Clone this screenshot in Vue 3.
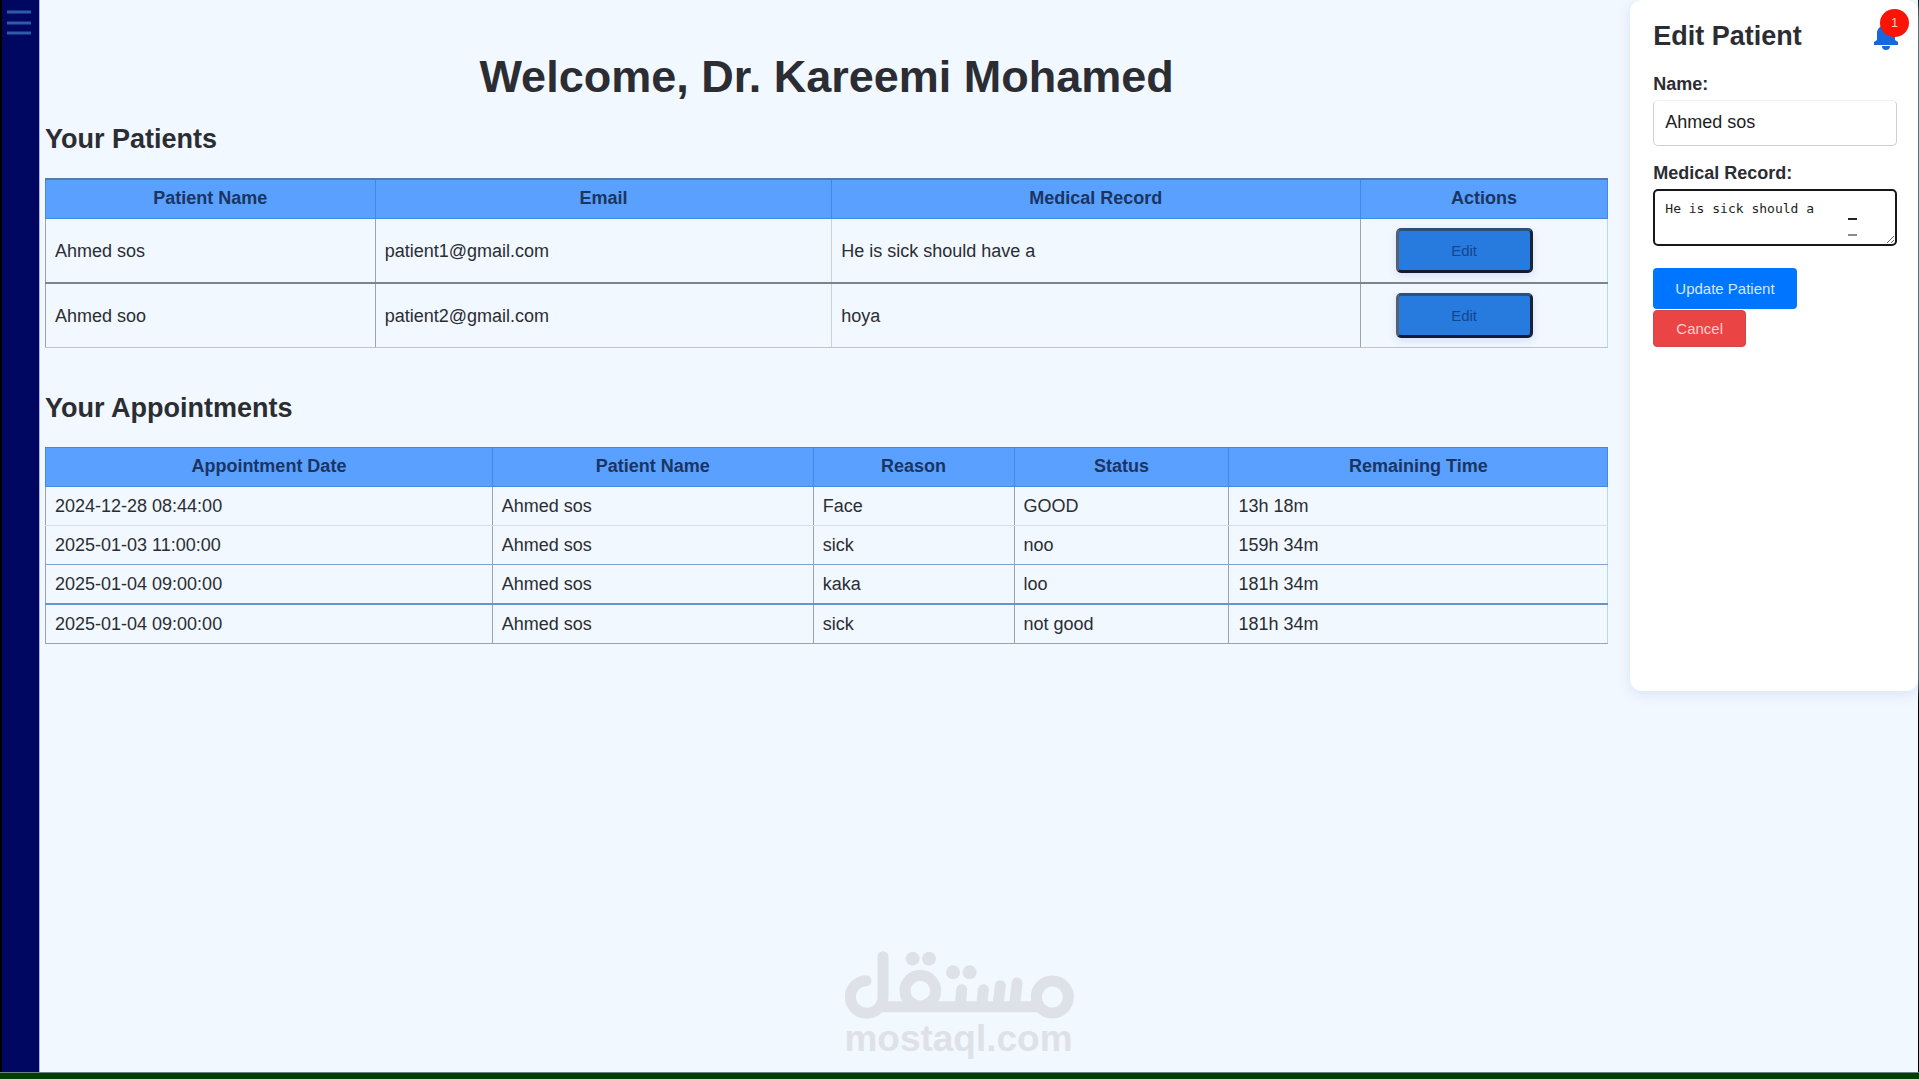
<script setup>
import { ref } from 'vue'

const patientColumns = [
  { label: 'Patient Name', weight: 330 },
  { label: 'Email', weight: 457 },
  { label: 'Medical Record', weight: 529 },
  { label: 'Actions', weight: 248 },
]
const patients = [
  { name: 'Ahmed sos', email: 'patient1@gmail.com', record: 'He is sick should have a' },
  { name: 'Ahmed soo', email: 'patient2@gmail.com', record: 'hoya' },
]

const appointmentColumns = [
  { label: 'Appointment Date', weight: 447 },
  { label: 'Patient Name', weight: 321 },
  { label: 'Reason', weight: 201 },
  { label: 'Status', weight: 215 },
  { label: 'Remaining Time', weight: 379 },
]
const appointments = [
  ['2024-12-28 08:44:00', 'Ahmed sos', 'Face', 'GOOD', '13h 18m'],
  ['2025-01-03 11:00:00', 'Ahmed sos', 'sick', 'noo', '159h 34m'],
  ['2025-01-04 09:00:00', 'Ahmed sos', 'kaka', 'loo', '181h 34m'],
  ['2025-01-04 09:00:00', 'Ahmed sos', 'sick', 'not good', '181h 34m'],
]

const share = (columns, column) =>
  (column.weight / columns.reduce((sum, c) => sum + c.weight, 0)) * 100 + '%'

const name = ref('Ahmed sos')
const record = ref('He is sick should a')
</script>

<template>
  <div class="page">
    <div class="layout">
      <nav class="sidebar">
        <button class="menu" type="button" aria-label="Menu">
          <svg width="24" height="25" viewBox="0 0 24 25" stroke="#2c5ba8" stroke-width="3">
            <path d="M0 2H24M0 13H24M0 23H24" />
          </svg>
        </button>
      </nav>

      <main class="content">
        <h1>Welcome, Dr. Kareemi Mohamed</h1>

        <section>
          <h2>Your Patients</h2>
          <table class="patients">
            <colgroup>
              <col v-for="c in patientColumns" :key="c.label" :style="{ width: share(patientColumns, c) }" />
            </colgroup>
            <thead>
              <tr>
                <th v-for="c in patientColumns" :key="c.label" scope="col">{{ c.label }}</th>
              </tr>
            </thead>
            <tbody>
              <tr v-for="p in patients" :key="p.email">
                <td>{{ p.name }}</td>
                <td>{{ p.email }}</td>
                <td>{{ p.record }}</td>
                <td><button class="edit" type="button">Edit</button></td>
              </tr>
            </tbody>
          </table>
        </section>

        <section>
          <h2>Your Appointments</h2>
          <table class="appointments">
            <colgroup>
              <col v-for="c in appointmentColumns" :key="c.label" :style="{ width: share(appointmentColumns, c) }" />
            </colgroup>
            <thead>
              <tr>
                <th v-for="c in appointmentColumns" :key="c.label" scope="col">{{ c.label }}</th>
              </tr>
            </thead>
            <tbody>
              <tr v-for="(row, i) in appointments" :key="i">
                <td v-for="(cell, j) in row" :key="j">{{ cell }}</td>
              </tr>
            </tbody>
          </table>
        </section>
      </main>

      <aside class="panel">
        <h2>Edit Patient</h2>
        <button class="bell" type="button" aria-label="Notifications">
          <svg width="24" height="28" viewBox="0 0 24 28" fill="#1668dc">
            <path d="M12 0a2 2 0 0 1 2 2v1c4 1 7 4 7 8v7l3 2v3H0v-3l3-2v-7c0-4 3-7 7-8V2a2 2 0 0 1 2-2zM8 24h8a4 4 0 0 1-8 0z" />
          </svg>
          <span class="badge">1</span>
        </button>
        <form @submit.prevent>
          <label for="name">Name:</label>
          <input id="name" v-model="name" type="text" />
          <label for="record">Medical Record:</label>
          <div class="record">
            <textarea id="record" v-model="record"></textarea>
            <svg class="beam" width="9" height="18" viewBox="0 0 9 18" stroke-width="2">
              <path d="M0 1H9" stroke="#26262a" />
              <path d="M0 17H9" stroke="#8b8b8f" />
            </svg>
          </div>
          <div class="actions">
            <button class="update" type="submit">Update Patient</button>
            <button class="cancel" type="button">Cancel</button>
          </div>
        </form>
      </aside>
    </div>

    <footer class="strip"></footer>

    <div class="watermark">
      <svg width="230" height="68" viewBox="72 62 690 204" fill="none" stroke="#dee2e8" stroke-width="33" stroke-linecap="round" role="img" aria-label="مستقل">
        <circle cx="697" cy="200" r="48" />
        <path d="M175 229H655" stroke-linecap="butt" />
        <path d="M138 151A49 49 0 1 0 189 200V79" />
        <circle cx="301" cy="181" r="46" />
        <path d="M425 178L421 225M490 178L485 225M541 166L534 225M591 158L584 225" />
        <g fill="#dee2e8" stroke="none">
          <circle cx="278" cy="85" r="21" />
          <circle cx="327" cy="85" r="21" />
          <circle cx="399" cy="126" r="21" />
          <circle cx="449" cy="126" r="21" />
        </g>
      </svg>
      <span>mostaql.com</span>
    </div>
  </div>
</template>

<style>
body {
  margin: 0;
  background: #f1f8ff;
}
</style>

<style scoped>
* {
  box-sizing: border-box;
}
.page {
  position: relative;
  display: flex;
  flex-direction: column;
  min-height: 100vh;
  font-family: 'Liberation Sans', Arial, sans-serif;
  font-size: 18px;
  line-height: 20px;
  color: #2b2d33;
  background: #f1f8ff;
}
.layout {
  flex: 1;
  display: flex;
  align-items: flex-start;
  border-right: 1px solid #000;
}
.sidebar {
  flex: none;
  align-self: stretch;
  width: 40px;
  padding: 10px 0 0 5px;
  border-left: 2px solid #000;
  border-right: 1px solid #a9b0ea;
  background: #000760;
}
.menu,
.bell {
  padding: 0;
  border: 0;
  background: none;
}
.menu svg,
.bell svg {
  display: block;
}
.content {
  flex: 1;
  padding: 51px 22px 0 5px;
}
h1,
h2 {
  margin: 0;
}
h1 {
  margin-bottom: 20px;
  font-size: 45px;
  line-height: 52px;
  text-align: center;
}
h2 {
  font-size: 27px;
  line-height: 32px;
}
section {
  margin-bottom: 44px;
}
section h2 {
  margin-bottom: 23px;
}

table {
  width: 100%;
  table-layout: fixed;
  border-collapse: collapse;
}
th,
td {
  padding: 9px;
  border: 1px solid #98a4ae;
}
th {
  padding: 8px 9px 10px;
  color: #1b3563;
  background: #5aa0ff;
  border-color: #4488e0;
}
td {
  text-align: left;
}
td:last-child {
  border-right-color: #b4dce2;
}
.patients thead th {
  border-top: 2px solid #557ba8;
}
.patients tbody tr:first-child td {
  border-bottom: 2px solid #7c848c;
}
.patients tbody tr:last-child td {
  border-bottom-color: #a9cdd2;
}
.patients td:nth-child(2) {
  border-right-color: #c9d3de;
}
.patients td:nth-child(3) {
  border-left-color: #c9d3de;
}
.appointments tbody tr:nth-child(1) td {
  border-bottom-color: #d5e0ec;
}
.appointments tbody tr:nth-child(2) td {
  border-top-color: #d5e0ec;
  border-bottom-color: #7ba3d2;
}
.appointments tbody tr:nth-child(3) td {
  border-top-color: #7ba3d2;
  border-bottom: 2px solid #6794c9;
}

.edit {
  display: block;
  width: 137px;
  height: 45px;
  margin-left: 26px;
  border: 3px solid;
  border-color: #2d4f7c #1a2238 #121c34 #54606f;
  border-radius: 5px;
  font: 15px 'Liberation Sans', Arial, sans-serif;
  color: #16458c;
  background: #277bdf;
  box-shadow: 0 3px 8px #d8dff2;
}

.panel {
  position: relative;
  flex: none;
  width: 15%;
  min-height: 64vh;
  padding: 20px 21px 22px 23px;
  border-radius: 12px;
  background: #fff;
  box-shadow: 0 3px 14px #d9e2f5;
}
.bell {
  position: absolute;
  top: 22px;
  right: 20px;
}
.badge {
  position: absolute;
  top: -13px;
  right: -11px;
  width: 29px;
  height: 28px;
  border-radius: 50%;
  font: 13px/28px 'Liberation Sans', Arial, sans-serif;
  text-align: center;
  color: #ffc9c4;
  background: #fa1407;
}
form {
  display: flex;
  flex-direction: column;
  margin-top: 22px;
}
label {
  margin-bottom: 6px;
  font-weight: bold;
}
input {
  width: 100%;
  height: 46px;
  margin-bottom: 17px;
  padding: 0 11px 1px;
  border: 1px solid #cfcfd3;
  border-top-color: #f1f1f3;
  border-radius: 5px;
  font: 18px 'Liberation Sans', Arial, sans-serif;
  color: #1d1d20;
  background: #fff;
}
.record {
  position: relative;
}
textarea {
  display: block;
  width: 100%;
  height: 57px;
  padding: 9px 10px;
  border: 2px solid #17171b;
  border-radius: 5px;
  outline: 0;
  overflow: hidden;
  resize: vertical;
  font: 13px/18px 'DejaVu Sans Mono', monospace;
  color: #1d1d20;
  background: #fff;
}
.beam {
  position: absolute;
  top: 29px;
  right: 40px;
}
.actions {
  display: flex;
  flex-direction: column;
  align-items: flex-start;
  gap: 1px;
  margin-top: 22px;
}
.actions button {
  padding: 0 22px;
  border: 0;
  border-radius: 4px;
  font: 15px 'Liberation Sans', Arial, sans-serif;
}
.actions .update {
  height: 41px;
  color: #d6e8ff;
  background: #0075ff;
}
.actions .cancel {
  height: 37px;
  color: #f9cfcf;
  border: 1px solid #cf4848;
  background: #eb4444;
}

.strip {
  height: 7px;
  border-top: 1px solid #6c8086;
  background: #003f00;
}
.watermark {
  position: absolute;
  right: 0;
  bottom: 20px;
  left: 0;
  display: flex;
  flex-direction: column;
  align-items: center;
  padding-right: 2px;
  pointer-events: none;
  font-size: 37px;
  line-height: 40px;
  font-weight: bold;
  color: #dee2e8;
}
</style>
